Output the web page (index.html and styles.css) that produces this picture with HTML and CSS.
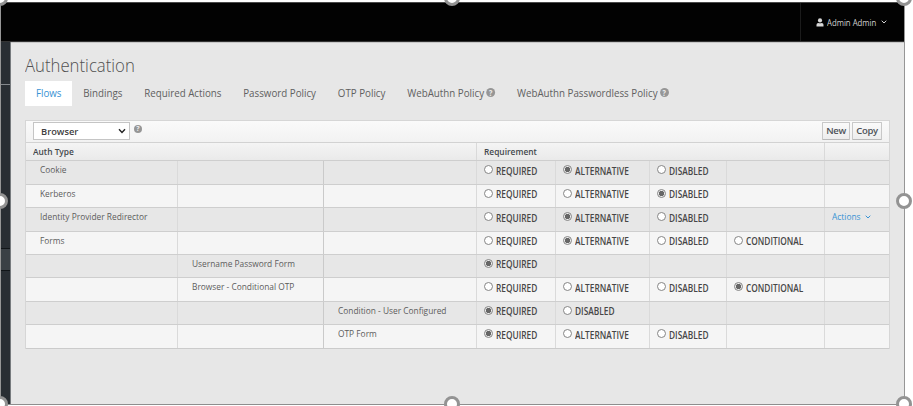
FILE: index.html
```html
<!DOCTYPE html>
<html lang="en">
<head>
<meta charset="utf-8">
<title>Authentication</title>
<link rel="stylesheet" href="styles.css">
</head>
<body>
<div class="frame">
  <header class="topbar">
    <div class="user">
      <svg class="person" viewBox="0 0 8 9"><circle cx="4" cy="2.4" r="2.1"/><path d="M.5 8.5V6.7Q.5 5 2.3 4.9Q4 5.8 5.7 4.9Q7.5 5 7.5 6.7V8.5Z"/></svg>
      <span class="who">Admin Admin</span>
      <svg class="chev" viewBox="0 0 6 4"><path d="M.7.7L3 3L5.3.7"/></svg>
    </div>
  </header>
  <div class="body">
    <aside class="sidebar"><div class="s1"></div><div class="s2"></div><div class="s3"></div></aside>
    <main>
      <h1><span>Authentication</span></h1>
      <nav class="tabs">
        <a class="active">Flows</a><a>Bindings</a><a>Required Actions</a><a>Password Policy</a><a>OTP Policy</a>
        <a>WebAuthn Policy<i class="help">?</i></a><a>WebAuthn Passwordless Policy<i class="help">?</i></a>
      </nav>
      <section class="table">
        <div class="toolbar">
          <div class="select"><span>Browser</span><svg viewBox="0 0 8 6"><path d="M1 1.2L4 4.4L7 1.2"/></svg></div>
          <i class="help small">?</i>
          <button class="new">New</button><button>Copy</button>
        </div>
        <div class="head"><b><span>Auth Type</span></b><b><span>Requirement</span></b><b></b></div>
        <div id="rows"></div>
      </section>
    </main>
  </div>
</div>
<i class="handle l t"></i><i class="handle c t"></i><i class="handle r t"></i>
<i class="handle l m"></i><i class="handle r m"></i>
<i class="handle l b"></i><i class="handle c b"></i><i class="handle r b"></i>
<script src="rows.js"></script>
</body>
</html>
```
FILE: rows.js
```js
const RAD = ['REQUIRED', 'ALTERNATIVE', 'DISABLED'];
const rows = [
  [0, 'Cookie', RAD, 1],
  [0, 'Kerberos', RAD, 2],
  [0, 'Identity Provider Redirector', RAD, 1, true],
  [0, 'Forms', [...RAD, 'CONDITIONAL'], 1],
  [1, 'Username Password Form', ['REQUIRED'], 0],
  [1, 'Browser - Conditional OTP', [...RAD, 'CONDITIONAL'], 3],
  [2, 'Condition - User Configured', ['REQUIRED', 'DISABLED'], 0],
  [2, 'OTP Form', RAD, 0]
];
document.getElementById('rows').innerHTML = rows.map(([level, name, options, on, actions]) => {
  let cells = '';
  for (let i = 0; i < 3; i++) cells += `<div class="name">${i === level ? `<span>${name}</span>` : ''}</div>`;
  for (let i = 0; i < 4; i++) {
    cells += `<div class="opt">${options[i] ? `<i class="radio${i === on ? ' on' : ''}"></i><span>${options[i]}</span>` : ''}</div>`;
  }
  cells += `<div class="act">${actions ? '<span>Actions</span><svg class="chev" viewBox="0 0 6 4"><path d="M.7.7L3 3L5.3.7"/></svg>' : ''}</div>`;
  return `<div class="row">${cells}</div>`;
}).join('');
```
FILE: styles.css
```css
* { box-sizing: border-box; }
body { margin: 0; background: #fff; width: 913px; height: 406px; overflow: hidden; position: relative; font-family: "Open Sans", sans-serif; font-size: 9.5px; color: #5a5a5a; }
.frame { width: 905px; height: 405px; padding-top: 2px; border-left: 1px solid #969696; border-right: 1px solid #969696; border-bottom: 1px solid #8e8e8e; display: flex; flex-direction: column; }
.topbar { height: 40px; flex: none; background: #020202; border-top: 1px solid #4a4a4a; border-bottom: 1px solid #333; display: flex; justify-content: flex-end; }
.user { width: 104px; border-left: 1px solid #1b1b1b; padding: 0 0 0 15px; display: flex; align-items: center; color: #d2d2d2; font-size: 9.5px; white-space: nowrap; }
.person { width: 8px; height: 9px; fill: #d8d8d8; margin-right: 3px; }
.chev { width: 6px; height: 4px; fill: none; stroke: currentColor; stroke-width: 1; }
.body { flex: 1; display: flex; min-height: 0; }
.sidebar { width: 10px; background: #292e33; border-right: 1px solid #777b7e; display: flex; flex-direction: column; }
.s1 { height: 43px; border-bottom: 1px solid #85898d; }
.s2 { height: 163px; }
.s3 { height: 23px; background: #3a4045; border-top: 1px solid #111518; border-bottom: 1px solid #111518; }
main { flex: 1; background: #e7e7e7; border-top: 1px solid #c8c8c8; padding: 0 14px; min-width: 0; }
span { display: inline-block; transform: scaleX(.88); transform-origin: 0 50%; }
h1 { margin: 0; height: 38px; padding-top: 9px; font-size: 18.5px; line-height: 26px; font-weight: 300; color: #505050; }
h1 span { transform: scaleX(.905); }
.who { transform: scaleX(.82); }
.user .chev { margin-left: -6px; }
.tabs { display: flex; height: 25px; margin-bottom: 14px; transform: scaleX(.887); transform-origin: 0 0; }
.tabs a { padding: 0 12.3px 2px; line-height: 23px; font-size: 11px; color: #606060; white-space: nowrap; display: flex; align-items: center; }
.tabs .active { background: #fff; color: #3793d4; }
.help { font: bold 8px/9px "Open Sans", sans-serif; width: 10px; height: 9px; border-radius: 50%; background: #969696; color: #eee; text-align: center; margin-left: 2.5px; flex: none; }
.table { width: 865px; border: 1px solid #d6d6d6; border-bottom: 0; }
.toolbar { height: 21px; background: linear-gradient(#fafafa, #f2f2f2); display: flex; padding: 1px 7px 0; }
.select { width: 97px; height: 18px; background: #fff; border: 1px solid #c5c5c5; display: flex; align-items: center; justify-content: space-between; padding: 0 3px 0 7px; font-weight: 600; color: #404040; }
.select span { transform: scaleX(.98); }
.select svg { width: 8px; height: 6px; fill: none; stroke: #222; stroke-width: 1.4; }
.help.small { width: 8px; height: 8px; font-size: 7px; line-height: 8px; margin: 3px 0 0 4px; }
button { height: 18px; padding: 0 0 1px; margin: 0; width: 30px; border: 1px solid #c8c8c8; border-bottom-color: #b9b9b9; border-radius: 1px; background: linear-gradient(#fafafa, #ededed); font: 600 9.5px "Open Sans", sans-serif; letter-spacing: -.35px; color: #4d5258; }
.new { margin: 0 2px 0 auto; width: 28px; }
.head { height: 18.2px; border-top: 1px solid #d2d2d2; display: grid; grid-template-columns: 451px 348px 64px; background: linear-gradient(#f4f4f4, #eaeaea); line-height: 17px; }
.head b { font-weight: 600; padding-left: 7px; color: #44484c; border-right: 1px solid #d9d9d9; }
.head b:last-child { border: 0; }
#rows { border-bottom: 1px solid #cbcbcb; }
.row { height: 23.45px; border-top: 1px solid #cecece; display: grid; grid-template-columns: 151.5px 146.5px 153px 79px 94px 77px 98px 64px; background: #e7e7e7; }
.row:nth-child(even) { background: #f5f5f5; }
.row > div { border-right: 1px solid #dadada; white-space: nowrap; }
.row > div:last-child { border-right: 0; }
.row > div:nth-child(2) { border-color: #cacaca; }
.name { padding-left: 14px; line-height: 17px; font-size: 9.8px; color: #5c5c5c; }
.name span { transform: scaleX(.853); }
.opt { padding: 4px 0 0 7px; display: flex; line-height: 12px; font-size: 9.8px; font-weight: 600; color: #464646; }
.opt span { transform: scaleX(.85); margin-top: .5px; }
.radio { width: 9px; height: 9px; margin-right: 2.5px; border: 1px solid #858585; border-radius: 50%; background: #fff; flex: none; }
.radio.on { background: radial-gradient(circle, #666 0 2.3px, #eee 3px); }
.act { padding-left: 7px; line-height: 17px; color: #3793d4; display: flex; align-items: flex-start; }
.act .chev { margin: 7px 0 0 1px; }
.handle { position: absolute; width: 16px; height: 16px; border: 3px solid #939393; border-radius: 50%; background: #fff; }
.l { left: -8px; } .c { left: 444px; } .r { left: 896px; }
.t { top: -10px; } .m { top: 193px; } .b { top: 396px; }
```
